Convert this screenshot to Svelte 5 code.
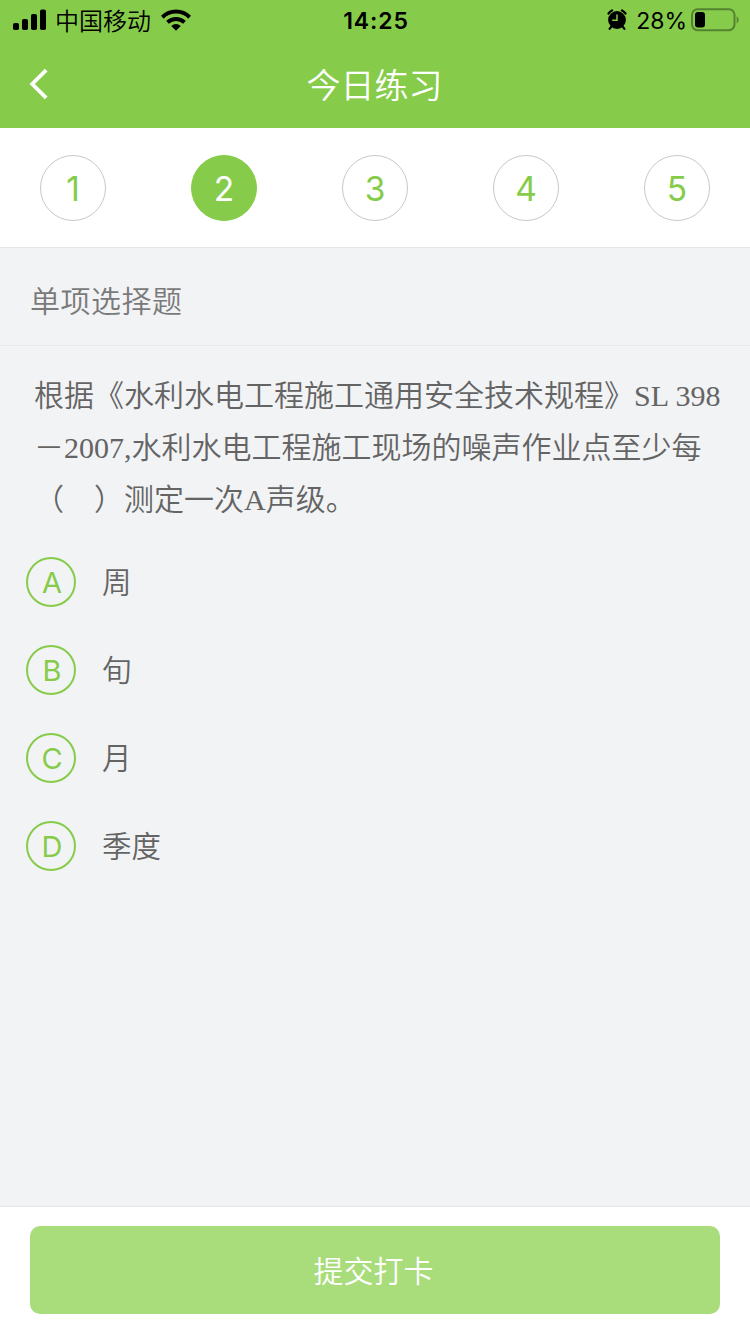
<script lang="ts">
    type Option = { key: string; text: string };

    const questions = [1, 2, 3, 4, 5];
    const lines = [
        "根据《水利水电工程施工通用安全技术规程》SL 398",
        "－2007,水利水电工程施工现场的噪声作业点至少每",
        "（　）测定一次A声级。",
    ];
    const options: Option[] = [
        { key: "A", text: "周" },
        { key: "B", text: "旬" },
        { key: "C", text: "月" },
        { key: "D", text: "季度" },
    ];

    let current = $state(2);
    let selected = $state("");
</script>

<div class="page">
    <header>
        <div class="status">
            <div class="carrier">
                <svg width="34" height="22" viewBox="0 0 34 22">
                    <rect x="0" y="14" width="6" height="7" rx="1.8" />
                    <rect x="9" y="10" width="6" height="11" rx="1.8" />
                    <rect x="18" y="5" width="6" height="16" rx="1.8" />
                    <rect x="27" y="0.5" width="6" height="20.5" rx="1.8" />
                </svg>
                <span>中国移动</span>
                <svg width="30" height="22" viewBox="0 0 30 22">
                    <g fill="none" stroke="#000" stroke-width="4">
                        <path d="M1.3 8.2a19.6 19.6 0 0 1 27.4 0" />
                        <path d="M6.5 13.4a12.2 12.2 0 0 1 17 0" />
                    </g>
                    <path d="M15 21.8l-4.8-4.7a6.8 6.8 0 0 1 9.6 0z" />
                </svg>
            </div>
            <div class="time">14:25</div>
            <div class="battery">
                <svg width="20" height="22" viewBox="0 0 20 22">
                    <circle cx="10" cy="11" r="8.9" />
                    <path d="M4.6 17.4L2.6 19.8M15.4 17.4l2 2.4" stroke="#000" stroke-width="2.2" stroke-linecap="round" />
                    <path d="M1.6 4.4a9 9 0 0 1 3.4-2.9M18.4 4.4a9 9 0 0 0-3.4-2.9" fill="none" stroke="#000" stroke-width="2.4" stroke-linecap="round" />
                    <path d="M10 5.6v5.6H5.2" fill="none" stroke="#86cc4a" stroke-width="1.5" />
                </svg>
                <span>28%</span>
                <svg width="48" height="24" viewBox="0 0 48 24">
                    <rect x="1" y="1.2" width="42.5" height="21" rx="5.6" fill="none" stroke="#548230" stroke-width="2" />
                    <rect x="4" y="4" width="10" height="15.4" rx="3" />
                    <path d="M45.7 8.2c2.6 1.6 2.6 5.6 0 7.2z" fill="#548230" />
                </svg>
            </div>
        </div>
        <div class="nav">
            <button class="back" aria-label="返回">
                <svg width="20" height="32" viewBox="0 0 20 32">
                    <path d="M17.2 2.2L3.2 16l14 13.8" fill="none" stroke="#fff" stroke-width="3.8" />
                </svg>
            </button>
            <h1>今日练习</h1>
        </div>
    </header>

    <nav class="steps">
        {#each questions as n}
            <button class="step" class:active={n === current} onclick={() => (current = n)}>{n}</button>
        {/each}
    </nav>

    <div class="kind">单项选择题</div>

    <main>
        <div class="question">
            {#each lines as line}
                <p>{line}</p>
            {/each}
        </div>
        <div class="options">
            {#each options as option}
                <button class="option" onclick={() => (selected = option.key)}>
                    <span class="key" class:picked={selected === option.key}>{option.key}</span>
                    <span>{option.text}</span>
                </button>
            {/each}
        </div>
    </main>

    <footer>
        <button class="submit">提交打卡</button>
    </footer>
</div>

<style>
    :global(body) {
        margin: 0;
    }
    .page {
        display: flex;
        flex-direction: column;
        width: 750px;
        height: 1334px;
        overflow: hidden;
        background: #f2f3f5;
        color: #646464;
        font-family: Inter, "Noto Sans CJK SC", sans-serif;
        font-weight: 350;
    }
    button {
        margin: 0;
        padding: 0;
        border: 0;
        background: none;
        color: inherit;
        font: inherit;
    }
    svg {
        display: block;
        flex: none;
    }
    header {
        flex: none;
        height: 128px;
        background: #86cc4a;
    }
    .status {
        display: grid;
        grid-template-columns: 1fr auto 1fr;
        align-items: center;
        height: 40px;
        padding: 0 11px 0 13px;
        color: #000;
        font-size: 24px;
        line-height: 34px;
    }
    .status span,
    .time {
        padding-top: 2px;
    }
    .carrier,
    .battery {
        display: flex;
        align-items: center;
    }
    .carrier span {
        margin: 0 10px 0 8px;
        padding-top: 4px;
    }
    .time {
        font-weight: 600;
        font-size: 23px;
        letter-spacing: 0.9px;
    }
    .battery {
        justify-content: flex-end;
    }
    .battery span {
        margin: 0 4px 0 9px;
        font-size: 23px;
        font-weight: 400;
    }
    .nav {
        display: grid;
        grid-template-columns: 80px 1fr 80px;
        align-items: center;
        height: 88px;
    }
    .back {
        justify-self: start;
        padding-left: 29px;
    }
    h1 {
        margin: 0;
        padding: 3px 1px 0 0;
        color: #fff;
        font-size: 34px;
        font-weight: 350;
        line-height: 81px;
        text-align: center;
    }
    .steps {
        display: flex;
        flex: none;
        justify-content: space-between;
        align-items: center;
        box-sizing: border-box;
        height: 120px;
        padding: 0 40px;
        border-bottom: 1px solid #e6e6e6;
        background: #fff;
    }
    .step {
        box-sizing: border-box;
        width: 66px;
        height: 66px;
        padding-top: 2px;
        border: 1px solid #c8c8c8;
        border-radius: 50%;
        color: #86cc4a;
        font-size: 33.5px;
        font-weight: 400;
    }
    .step.active {
        border-color: #86cc4a;
        background: #86cc4a;
        color: #fff;
    }
    .kind {
        flex: none;
        box-sizing: border-box;
        height: 98px;
        padding-left: 30px;
        border-bottom: 1px solid #e8e9eb;
        color: #7a7a7a;
        font-size: 30px;
        letter-spacing: 0.5px;
        line-height: 107px;
    }
    main {
        flex: 1;
        padding: 24px 0 0 34px;
    }
    .question {
        font-family: "Liberation Serif", "Noto Sans CJK SC", serif;
        font-size: 30px;
        line-height: 52px;
        white-space: nowrap;
    }
    .question p {
        height: 52px;
        margin: 0;
    }
    .options {
        display: flex;
        flex-direction: column;
        gap: 38px;
        margin: 31px 0 0 -8px;
    }
    .option {
        display: flex;
        align-items: center;
        gap: 26px;
        height: 50px;
        font-size: 29.5px;
        line-height: 48px;
    }
    .key {
        box-sizing: border-box;
        width: 50px;
        height: 50px;
        padding-left: 2px;
        border: 2px solid #86cc4a;
        border-radius: 50%;
        color: #86cc4a;
        font-size: 29px;
        font-weight: 400;
        line-height: 47px;
        text-align: center;
    }
    .key.picked {
        background: #86cc4a;
        color: #fff;
    }
    footer {
        flex: none;
        box-sizing: border-box;
        height: 128px;
        padding: 19px 30px 0;
        border-top: 1px solid #e4e5e7;
        background: #fff;
    }
    .submit {
        width: 100%;
        height: 88px;
        padding: 0 3px 3px 0;
        border-radius: 10px;
        background: #a9dc7a;
        color: #fff;
        font-size: 30px;
    }
</style>
